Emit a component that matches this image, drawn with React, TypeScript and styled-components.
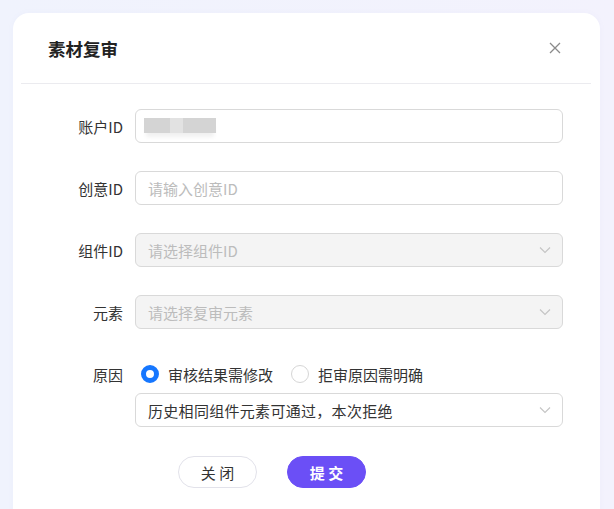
import React, { useState } from 'react'
import styled, { createGlobalStyle } from 'styled-components'

const GlobalStyle = createGlobalStyle`
  html, body {
    margin: 0;
    padding: 0;
    height: 100%;
  }
  body {
    background: linear-gradient(90deg, #f0f3fd 0%, #f3f2fd 100%);
    font-family: "Noto Sans CJK SC", "Noto Sans", sans-serif;
    overflow: hidden;
  }
`

const reasons = ['审核结果需修改', '拒审原因需明确']

const App = () => {
  const [reason, setReason] = useState(0)
  return (
    <>
      <GlobalStyle />
      <Page>
        <Card>
          <Header>
            <Title>素材复审</Title>
            <Close aria-label="关闭">
              <svg width="12" height="12" viewBox="0 0 12 12">
                <path d="M1 1L11 11M11 1L1 11" stroke="#8a8a8a" strokeWidth="1.3" fill="none" />
              </svg>
            </Close>
          </Header>
          <Divider />
          <Form>
            <Row>
              <Label>账户ID</Label>
              <Field>
                <Masked>
                  <Block $w={26} />
                  <Block $w={13} $light />
                  <Block $w={33} />
                </Masked>
              </Field>
            </Row>
            <Row>
              <Label>创意ID</Label>
              <Field>
                <Placeholder>请输入创意ID</Placeholder>
              </Field>
            </Row>
            <Row>
              <Label>组件ID</Label>
              <Field $disabled>
                <Placeholder>请选择组件ID</Placeholder>
                <Chevron />
              </Field>
            </Row>
            <Row>
              <Label>元素</Label>
              <Field $disabled>
                <Placeholder>请选择复审元素</Placeholder>
                <Chevron />
              </Field>
            </Row>
            <Row $tight>
              <Label>原因</Label>
              <Radios>
                {reasons.map((r, i) => (
                  <RadioItem key={r} onClick={() => setReason(i)}>
                    <RadioDot $checked={reason === i} />
                    {r}
                  </RadioItem>
                ))}
              </Radios>
            </Row>
            <Row>
              <Label />
              <Field>
                <Value>历史相同组件元素可通过，本次拒绝</Value>
                <Chevron />
              </Field>
            </Row>
          </Form>
          <Footer>
            <Button>关 闭</Button>
            <Button $primary>提 交</Button>
          </Footer>
        </Card>
      </Page>
    </>
  )
}

const Chevron = () => (
  <ChevronBox>
    <svg width="12" height="8" viewBox="0 0 12 8">
      <path d="M1 1.5L6 6.5L11 1.5" stroke="#c4c4c4" strokeWidth="1.1" fill="none" />
    </svg>
  </ChevronBox>
)

export default App

const Page = styled.div`
  padding: 13px 14px 0 13px;
`
const Card = styled.div`
  background: #fff;
  border-radius: 16px;
  height: 520px;
  box-shadow: 0 0 6px rgba(120, 130, 200, 0.04);
`
const Header = styled.div`
  height: 70px;
  display: flex;
  align-items: center;
  justify-content: space-between;
  padding: 0 39px 0 35px;
`
const Title = styled.h3`
  margin: 0;
  font-size: 17.5px;
  font-weight: 700;
  color: #222;
`
const Close = styled.div`
  width: 12px;
  height: 12px;
  display: flex;
  cursor: pointer;
`
const Divider = styled.div`
  height: 1px;
  background: #ebebef;
  margin: 0 9px 0 8px;
`
const Form = styled.div`
  padding: 25px 37px 0 0;
  display: flex;
  flex-direction: column;
`
const Row = styled.div<{ $tight?: boolean }>`
  display: grid;
  grid-template-columns: 110px 1fr;
  column-gap: 12px;
  align-items: center;
  margin-bottom: ${p => (p.$tight ? '2px' : '28px')};
  &:last-child {
    margin-bottom: 0;
  }
`
const Label = styled.div`
  text-align: right;
  font-size: 15px;
  color: #333;
`
const Field = styled.div<{ $disabled?: boolean }>`
  height: 34px;
  box-sizing: border-box;
  border: 1px solid #d9d9d9;
  border-radius: 6px;
  background: ${p => (p.$disabled ? '#f4f4f4' : '#fff')};
  display: flex;
  align-items: center;
  padding: 0 12px;
  position: relative;
`
const Placeholder = styled.span`
  font-size: 15px;
  color: #bcbcbc;
  flex: 1;
`
const Value = styled.span`
  font-size: 15px;
  letter-spacing: 0.3px;
  color: #333;
  flex: 1;
`
const ChevronBox = styled.span`
  display: flex;
  margin-right: -1px;
`
const Masked = styled.div`
  display: flex;
  height: 15px;
  margin-left: -4px;
  margin-top: -2px;
  box-shadow: 0 6px 4px -2px #f0f0f0;
`
const Block = styled.span<{ $w: number; $light?: boolean }>`
  width: ${p => p.$w}px;
  height: 100%;
  background: ${p => (p.$light ? '#e2e2e2' : '#d4d4d4')};
`
const Radios = styled.div`
  height: 34px;
  display: flex;
  align-items: center;
  gap: 18px;
`
const RadioItem = styled.label`
  display: flex;
  align-items: center;
  gap: 9px;
  font-size: 15px;
  color: #333;
  cursor: pointer;
  margin-left: 6px;
  &:not(:first-child) {
    margin-left: 0;
  }
`
const RadioDot = styled.span<{ $checked: boolean }>`
  width: 18px;
  height: 18px;
  box-sizing: border-box;
  border-radius: 50%;
  border: ${p => (p.$checked ? '5px solid #1677ff' : '1px solid #d6d6d6')};
  background: #fff;
`
const Footer = styled.div`
  display: flex;
  gap: 30px;
  padding: 29px 0 0 165px;
`
const Button = styled.button<{ $primary?: boolean }>`
  width: 79px;
  height: 32px;
  border-radius: 16px;
  font-family: inherit;
  font-size: 15px;
  cursor: pointer;
  border: 1px solid ${p => (p.$primary ? '#6b4ff6' : '#e2e2ea')};
  background: ${p => (p.$primary ? '#6b4ff6' : '#fff')};
  color: ${p => (p.$primary ? '#fff' : '#333')};
  font-weight: ${p => (p.$primary ? 700 : 400)};
`
